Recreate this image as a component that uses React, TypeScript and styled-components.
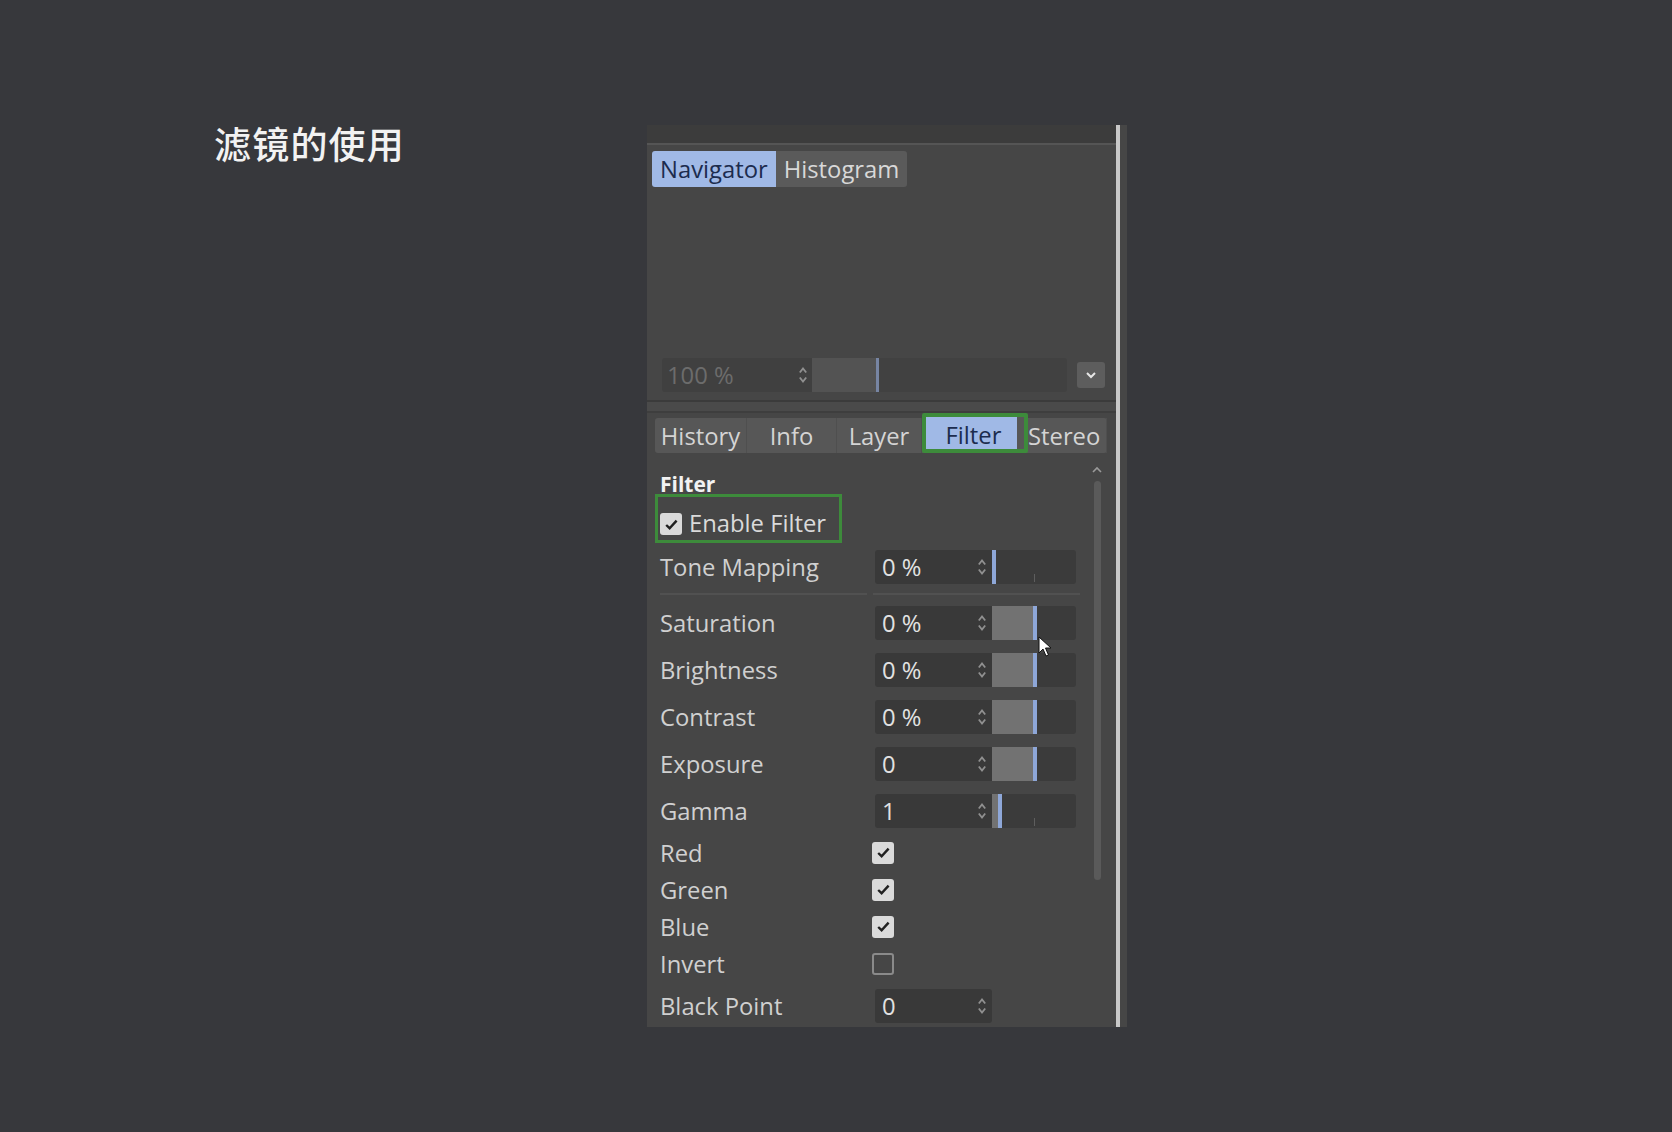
import React from "react";
import styled, { createGlobalStyle } from "styled-components";

const Global = createGlobalStyle`
  html, body { margin: 0; padding: 0; background: #37383c; }
  body { font-family: "Open Sans", "Noto Sans", sans-serif; }
`;

const Stage = styled.div`
  width: 1672px;
  height: 1132px;
  display: flex;
  align-items: flex-start;
  padding-top: 125px;
  box-sizing: border-box;
  background: #37383c;
  overflow: hidden;
`;

const TitleCol = styled.div`
  width: 647px;
  padding-left: 214px;
  box-sizing: border-box;
`;

const Title = styled.h1`
  margin: -4px 0 0;
  font-family: "Noto Sans CJK SC", "Noto Sans", sans-serif;
  font-weight: 500;
  font-size: 37px;
  line-height: 44px;
  color: #f2f2f2;
  letter-spacing: 1.2px;
`;

const Panel = styled.div`
  position: relative;
  width: 480px;
  height: 902px;
  background: #464646;
  display: flex;
  padding-right: 7px;
  box-sizing: border-box;
  color: #d2d2d2;
  font-size: 23.8px;
`;

const Main = styled.div`
  flex: 1;
  min-width: 0;
  display: flex;
  flex-direction: column;
  border-right: 4px solid #c8c8c8;
`;

const TopStrip = styled.div`
  height: 18px;
  background: #3c3c3c;
  border-bottom: 2px solid #555555;
`;

const NavSection = styled.div`
  height: 255px;
  display: flex;
  flex-direction: column;
  padding: 6px 0 8px 5px;
  box-sizing: border-box;
`;

const NavTabs = styled.div`
  display: flex;
  align-self: flex-start;
  border-radius: 3px;
  overflow: hidden;
`;

const NavTab = styled.div<{ $active?: boolean }>`
  height: 36px;
  padding: 0 8px;
  display: flex;
  align-items: center;
  background: ${(p) => (p.$active ? "#a0b9e6" : "#5a5a5a")};
  color: ${(p) => (p.$active ? "#1c2c4e" : "#d8d8d8")};
`;

const NavView = styled.div`
  flex: 1;
`;

const ZoomRow = styled.div`
  display: flex;
  align-items: center;
  margin-left: 10px;
  height: 34px;
`;

const ZoomInput = styled.div`
  width: 150px;
  height: 34px;
  background: #404040;
  color: #6c6c6c;
  display: flex;
  align-items: center;
  justify-content: space-between;
  padding: 0 4px 0 5px;
  box-sizing: border-box;
  border-radius: 3px 0 0 3px;
`;

const ZoomSlider = styled.div`
  width: 255px;
  height: 34px;
  background: #414141;
  display: flex;
  border-radius: 0 3px 3px 0;
`;

const ZoomFill = styled.div`
  width: 67px;
  background: #535353;
  box-sizing: border-box;
  border-right: 3px solid #7785a3;
`;

const DropButton = styled.div`
  width: 28px;
  height: 26px;
  margin-left: 10px;
  background: #5d5d5d;
  border-radius: 3px;
  display: flex;
  align-items: center;
  justify-content: center;
`;

const Divider = styled.div`
  height: 13px;
  background: #4a4a4a;
  border-top: 2px solid #3b3b3b;
  border-bottom: 2px solid #3e3e3e;
  box-sizing: border-box;
`;

const TabBar = styled.div`
  margin: 5px 0 0 8px;
  width: 452px;
  height: 35px;
  display: flex;
  background: #575757;
  border-radius: 3px;
`;

const Tab = styled.div<{ $w: number; $align?: string }>`
  width: ${(p) => p.$w}px;
  height: 100%;
  display: flex;
  align-items: center;
  justify-content: ${(p) => p.$align || "center"};
  border-right: 1px solid #4f4f4f;
  box-sizing: border-box;
  color: #d4d4d4;
  white-space: nowrap;
  overflow: hidden;
`;

const MarkedTab = styled.div`
  width: 106px;
  height: 40px;
  margin-top: -5px;
  border: 4px solid #3d8b3b;
  border-radius: 2px;
  padding-right: 7px;
  background: #575757;
  box-sizing: border-box;
  display: flex;
`;

const ActiveTab = styled.div`
  flex: 1;
  background: #a0b9e6;
  color: #1c2c4e;
  display: flex;
  align-items: center;
  justify-content: center;
  padding: 4px 0 0 4px;
`;

const Body = styled.div`
  flex: 1;
  display: flex;
  min-height: 0;
`;

const Content = styled.div`
  flex: 1;
  padding-left: 8px;
  display: flex;
  flex-direction: column;
`;

const Heading = styled.div`
  margin: 21px 0 0 5px;
  font-size: 21px;
  line-height: 20px;
  font-weight: 700;
  color: #f2f2f2;
`;

const EnableBox = styled.div`
  width: 187px;
  height: 49px;
  border: 3px solid #3d8b3b;
  box-sizing: border-box;
  display: flex;
  align-items: flex-end;
  gap: 7px;
  padding: 0 0 5px 2px;
  color: #dadada;
  line-height: 23px;
`;

const PropRow = styled.div<{ $h: number; $mt: number }>`
  display: grid;
  grid-template-columns: 215px 117px 84px;
  align-items: center;
  height: ${(p) => p.$h}px;
  margin-top: ${(p) => p.$mt}px;
  padding-left: 5px;
`;

const Label = styled.div`
  color: #d0d0d0;
  white-space: nowrap;
`;

const NumberField = styled.div<{ $solo?: boolean }>`
  height: 34px;
  background: #393939;
  color: #e2e2e2;
  display: flex;
  align-items: center;
  justify-content: space-between;
  padding: 0 5px 0 7px;
  box-sizing: border-box;
  border-radius: ${(p) => (p.$solo ? "3px" : "3px 0 0 3px")};
`;

const Slider = styled.div`
  position: relative;
  height: 34px;
  background: #3b3b3b;
  border-radius: 0 3px 3px 0;
  display: flex;
`;

const SliderFill = styled.div`
  position: relative;
  z-index: 1;
  height: 100%;
  background: #727272;
  box-sizing: border-box;
  border-right: 4px solid #8ea7d8;
`;

const Tick = styled.div`
  position: absolute;
  left: 42px;
  bottom: 2px;
  width: 1px;
  height: 8px;
  background: #5e5e5e;
`;

const SepLine = styled.div`
  display: flex;
  gap: 6px;
  margin: 9px 0 0 5px;
`;

const SepSeg = styled.div<{ $w: number }>`
  width: ${(p) => p.$w}px;
  height: 2px;
  background: #515151;
`;

const Box = styled.div<{ $on: boolean }>`
  width: 22px;
  height: 22px;
  margin-left: -3px;
  border-radius: 3px;
  box-sizing: border-box;
  background: ${(p) => (p.$on ? "#dadada" : "transparent")};
  border: ${(p) => (p.$on ? "none" : "2px solid #8a8a8a")};
  display: flex;
  align-items: center;
  justify-content: center;
`;

const EnableCheck = styled.div`
  display: flex;
  padding-left: 3px;
`;

const ScrollCol = styled.div`
  width: 8px;
  margin-right: 15px;
  padding-top: 13px;
  display: flex;
  flex-direction: column;
  align-items: center;
`;

const ScrollTrack = styled.div`
  margin-top: 7px;
  width: 7px;
  height: 399px;
  background: #5a5a5a;
  border-radius: 4px;
`;

const Cursor = styled.svg`
  position: absolute;
  left: 391px;
  top: 511px;
  z-index: 2;
`;

const Spinner = () => (
  <svg width="10" height="20" viewBox="0 0 10 20">
    <path d="M1.8 7.5 L5 3.5 L8.2 7.5 M1.8 12.5 L5 16.5 L8.2 12.5" fill="none" stroke="#909090" strokeWidth="1.8" />
  </svg>
);

const Check = ({ on }: { on: boolean }) => (
  <Box $on={on}>
    {on && (
      <svg width="15" height="13" viewBox="0 0 15 13">
        <path d="M2.2 7 L5.6 10.2 L12.6 2.6" fill="none" stroke="#202020" strokeWidth="2.4" />
      </svg>
    )}
  </Box>
);

type SliderRow = { label: string; value: string; pos: number };

const sliderRows: SliderRow[] = [
  { label: "Saturation", value: "0 %", pos: 45 },
  { label: "Brightness", value: "0 %", pos: 45 },
  { label: "Contrast", value: "0 %", pos: 45 },
  { label: "Exposure", value: "0", pos: 45 },
  { label: "Gamma", value: "1", pos: 10 },
];

const checkRows = [
  { label: "Red", on: true },
  { label: "Green", on: true },
  { label: "Blue", on: true },
  { label: "Invert", on: false },
];

const ValueSlider = ({ value, pos }: { value: string; pos: number }) => (
  <>
    <NumberField>
      <span>{value}</span>
      <Spinner />
    </NumberField>
    <Slider>
      <Tick />
      <SliderFill style={{ width: pos }} />
    </Slider>
  </>
);

export default function App() {
  return (
    <Stage>
      <Global />
      <TitleCol>
        <Title>滤镜的使用</Title>
      </TitleCol>
      <Panel>
        <Main>
          <TopStrip />
          <NavSection>
            <NavTabs>
              <NavTab $active>Navigator</NavTab>
              <NavTab>Histogram</NavTab>
            </NavTabs>
            <NavView />
            <ZoomRow>
              <ZoomInput>
                <span>100 %</span>
                <Spinner />
              </ZoomInput>
              <ZoomSlider>
                <ZoomFill />
              </ZoomSlider>
              <DropButton>
                <svg width="12" height="8" viewBox="0 0 12 8">
                  <path d="M2 2 L6 6 L10 2" fill="none" stroke="#e6e6e6" strokeWidth="2" />
                </svg>
              </DropButton>
            </ZoomRow>
          </NavSection>
          <Divider />
          <TabBar>
            <Tab $w={92}>History</Tab>
            <Tab $w={90}>Info</Tab>
            <Tab $w={85}>Layer</Tab>
            <MarkedTab>
              <ActiveTab>Filter</ActiveTab>
            </MarkedTab>
            <Tab $w={79} $align="flex-start">Stereo</Tab>
          </TabBar>
          <Body>
            <Content>
              <Heading>Filter</Heading>
              <EnableBox>
                <EnableCheck>
                  <Check on />
                </EnableCheck>
                <span>Enable Filter</span>
              </EnableBox>
              <PropRow $h={34} $mt={7}>
                <Label>Tone Mapping</Label>
                <ValueSlider value="0 %" pos={4} />
              </PropRow>
              <SepLine>
                <SepSeg $w={207} />
                <SepSeg $w={207} />
              </SepLine>
              <PropRow $h={34} $mt={11}>
                <Label>{sliderRows[0].label}</Label>
                <ValueSlider value={sliderRows[0].value} pos={sliderRows[0].pos} />
              </PropRow>
              {sliderRows.slice(1).map((r) => (
                <PropRow key={r.label} $h={34} $mt={13}>
                  <Label>{r.label}</Label>
                  <ValueSlider value={r.value} pos={r.pos} />
                </PropRow>
              ))}
              {checkRows.map((r, i) => (
                <PropRow key={r.label} $h={37} $mt={i === 0 ? 6 : 0}>
                  <Label>{r.label}</Label>
                  <Check on={r.on} />
                </PropRow>
              ))}
              <PropRow $h={35} $mt={6}>
                <Label>Black Point</Label>
                <NumberField $solo>
                  <span>0</span>
                  <Spinner />
                </NumberField>
              </PropRow>
            </Content>
            <ScrollCol>
              <svg width="12" height="8" viewBox="0 0 12 8">
                <path d="M2 6 L6 2 L10 6" fill="none" stroke="#9a9a9a" strokeWidth="1.6" />
              </svg>
              <ScrollTrack />
            </ScrollCol>
          </Body>
        </Main>
        <Cursor width="14" height="22" viewBox="0 0 14 22">
          <path d="M1 1 L1 17 L5 13 L8 20 L10.5 19 L7.5 12 L13 12 Z" fill="#ffffff" stroke="#111" strokeWidth="1" />
        </Cursor>
      </Panel>
    </Stage>
  );
}
